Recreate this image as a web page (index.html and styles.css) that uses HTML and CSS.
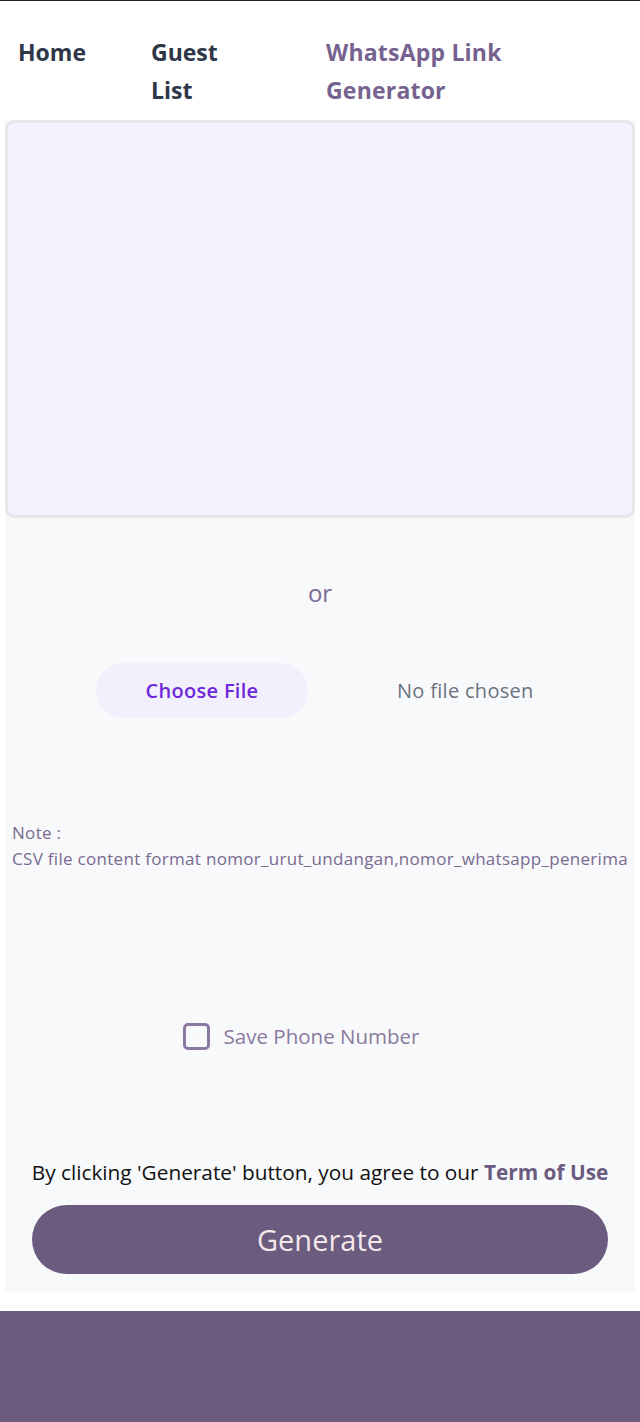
FILE: index.html
```html
<!DOCTYPE html>
<html lang="en">
<head>
<meta charset="utf-8">
<title>WhatsApp Link Generator</title>
<link rel="stylesheet" href="styles.css">
</head>
<body>
<div class="topline"></div>
<nav class="nav">
  <a class="nav-item nav-home" href="#">Home</a>
  <a class="nav-item nav-guest" href="#">Guest List</a>
  <a class="nav-item nav-active" href="#">WhatsApp Link Generator</a>
</nav>
<main class="panel">
  <textarea class="input-area"></textarea>
  <p class="or">or</p>
  <div class="file-row">
    <span class="file-btn">Choose File</span>
    <span class="file-name">No file chosen</span>
  </div>
  <p class="note">Note :<br>CSV file content format nomor_urut_undangan,nomor_whatsapp_penerima</p>
  <label class="check-row">
    <span class="checkbox"></span>
    <span class="check-label">Save Phone Number</span>
  </label>
  <p class="terms">By clicking 'Generate' button, you agree to our <a class="terms-link" href="#">Term of Use</a></p>
  <button class="generate" type="button">Generate</button>
</main>
<footer class="footer"></footer>
</body>
</html>
```
FILE: styles.css
```css
* { box-sizing: border-box; }
html, body { margin: 0; padding: 0; }
body {
  font-family: "Open Sans", "Noto Sans", sans-serif;
  background: #ffffff;
  color: #111827;
}
.topline { height: 1px; background: #222222; }
.nav {
  display: grid;
  grid-template-columns: 133px 175px 1fr;
  padding: 32px 0 0 18px;
  height: 119px;
}
.nav-item {
  font-size: 23px;
  font-weight: 700;
  line-height: 38px;
  text-decoration: none;
  color: #2d3748;
}
.nav-guest { max-width: 100px; }
.nav-active { color: #76628f; max-width: 220px; letter-spacing: 0.2px; }
.panel {
  margin: 0 5px;
  background: #f8f9fb;
  display: flex;
  flex-direction: column;
  align-items: center;
  padding-bottom: 18px;
}
.input-area {
  display: block;
  width: 100%;
  height: 398px;
  background: #f4f2fe;
  border: 3px solid #e5e7eb;
  border-radius: 9px;
  resize: none;
  margin: 0;
}
.or {
  margin: 59px 0 0;
  font-size: 24px;
  line-height: 32px;
  color: #7a6a8f;
}
.file-row {
  display: flex;
  align-items: center;
  margin-top: 54px;
  align-self: flex-start;
  padding-left: 91px;
}
.file-btn {
  width: 212px;
  height: 55px;
  border-radius: 28px;
  background: #f3f0fd;
  color: #6d28d9;
  font-size: 20px;
  font-weight: 600;
  letter-spacing: 0.3px;
  display: flex;
  align-items: center;
  justify-content: center;
}
.file-name {
  margin-left: 89px;
  font-size: 20px;
  letter-spacing: 0.3px;
  color: #6b7280;
}
.note {
  align-self: stretch;
  margin: 102px 0 0;
  padding-left: 7px;
  font-size: 17px;
  line-height: 26px;
  color: #7a6a8f;
  letter-spacing: 0.3px;
}
.check-row {
  display: flex;
  align-items: center;
  gap: 14px;
  margin-top: 150px;
  padding-right: 38px;
}
.checkbox {
  width: 27px;
  height: 27px;
  border: 3px solid #8b7aa0;
  border-radius: 5px;
  background: #f8f9fb;
}
.check-label {
  font-size: 20.5px;
  color: #8a7a9e;
}
.terms {
  margin: 107px 0 0;
  font-size: 20.8px;
  line-height: 30px;
  color: #111111;
}
.terms-link {
  font-weight: 700;
  color: #6b5b7e;
  text-decoration: none;
}
.generate {
  margin-top: 18px;
  width: 576px;
  height: 69px;
  border: none;
  border-radius: 35px;
  background: #6b5b7e;
  color: #f3e8ea;
  font-family: inherit;
  font-size: 29px;
}
.footer {
  margin-top: 19px;
  height: 111px;
  background: #6b5b7e;
}
```
